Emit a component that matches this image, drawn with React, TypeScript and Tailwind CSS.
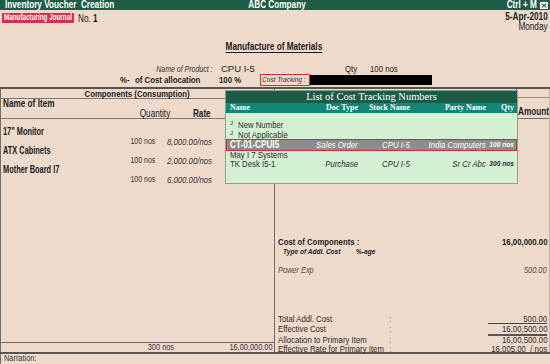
import React from "react"

const SANS = "font-['Liberation_Sans',Arial,sans-serif]"
const SERIF = "font-['Liberation_Serif','Times_New_Roman',serif]"

// Tally draws its sans text narrow; squeeze each run of text horizontally
const L = "inline-block shrink-0 whitespace-nowrap origin-left scale-x-[0.82]"
const R = "inline-block shrink-0 whitespace-nowrap origin-right scale-x-[0.82]"
const C = "inline-block shrink-0 whitespace-nowrap origin-center scale-x-[0.82]"
const L72 = "inline-block shrink-0 whitespace-nowrap origin-left scale-x-[0.74]"
const L70 = "inline-block shrink-0 whitespace-nowrap origin-left scale-x-[0.7]"

const components = [
  { name: "17\" Monitor", rate: "8,000.00/nos" },
  { name: "ATX Cabinets", rate: "2,000.00/nos" },
  { name: "Mother Board I7", rate: "6,000.00/nos" },
]

function Cols({ name, doc, stock, party, qty, bold }: { name: string; doc?: string; stock?: string; party?: string; qty?: string; bold?: boolean }) {
  return (
    <>
      <span className="flex w-[83px]">
        <span className={`${L} ${bold ? "font-bold text-[10px]" : ""}`}>{name}</span>
      </span>
      <span className="flex w-[45px] justify-end">
        <span className={`${R} italic`}>{doc}</span>
      </span>
      <span className="flex w-[52px] justify-end">
        <span className={`${R} italic`}>{stock}</span>
      </span>
      <span className="flex w-[76px] justify-end">
        <span className={`${R} italic`}>{party}</span>
      </span>
      <span className="flex w-[28px] justify-end">
        <span className={`${R} text-[8px] font-bold italic`}>{qty}</span>
      </span>
    </>
  )
}

function TotalRow({ label, value, h, cell = "" }: { label: string; value: string; h: string; cell?: string }) {
  return (
    <div className={`flex ${h} pl-[3px] pr-[2px] text-[9.5px] text-[#2b2b2b]`}>
      <span className="flex w-[111px]">
        <span className={L}>{label}</span>
      </span>
      <span className="text-[#888]">:</span>
      <span className="flex-1" />
      <span className={`flex w-[59px] justify-end ${cell}`}>
        <span className={R}>{value}</span>
      </span>
    </div>
  )
}

export default function App() {
  return (
    <div className={`relative flex h-[364px] w-[550px] flex-col overflow-hidden bg-[#eedaca] text-[10px] text-[#1c1c1c] ${SANS}`}>
      {/* title bar */}
      <div className="flex h-[10px] items-center bg-[#1f5c45] pl-[5px] pr-[2px] text-[10px] font-bold leading-[10px] text-white">
        <div className="flex flex-1">
          <span className={L}>Inventory Voucher&nbsp; Creation</span>
        </div>
        <div className="flex w-[60px] justify-center">
          <span className={C}>ABC Company</span>
        </div>
        <div className="flex flex-1 items-center justify-end gap-[3px]">
          <span className={R}>Ctrl + M</span>
          <svg width="8" height="7" viewBox="0 0 8 7">
            <rect x="0.5" y="0.5" width="7" height="6" fill="#d8dcd8" stroke="#ffffff" />
            <path d="M2 1.8 L6 5.2 M6 1.8 L2 5.2" stroke="#1f3f33" strokeWidth="1" />
          </svg>
        </div>
      </div>

      {/* voucher header */}
      <div className="flex flex-col pb-[1px]">
        <div className="flex h-[23px] justify-between">
          <div className="mt-[3px] flex h-[10px] items-center pl-[2px]">
            <span className="flex h-[10px] w-[72px] shrink-0 items-center bg-[#d3304b] pl-[2px] text-[9px] font-bold text-white">
              <span className={L70}>Manufacturing Journal</span>
            </span>
            <span className={`${L} ml-[4px]`}>
              No. <b>1</b>
            </span>
          </div>
          <div className="flex flex-col items-end pr-[2px] pt-[2px] leading-[10px]">
            <span className={`${R} font-bold`}>5-Apr-2010</span>
            <span className={R}>Monday</span>
          </div>
        </div>
        <div className="mt-[8px] flex h-[11px] justify-center pr-[3px] font-bold leading-[11px]">
          <span className={`${C} underline underline-offset-2`}>Manufacture of Materials</span>
        </div>
        <div className="mt-[12px] flex h-[10px] items-center leading-[10px]">
          <span className="flex w-[213px] justify-end">
            <span className={`${R} text-[8.5px] italic text-[#333]`}>Name of Product :</span>
          </span>
          <span className="w-[132px] pl-[8px] text-[9.5px]">CPU I-5</span>
          <span className="flex w-[25px] text-[9.5px]">
            <span className={L}>Qty</span>
          </span>
          <span className={`${L} text-[9.5px]`}>100 nos</span>
        </div>
        <div className="flex h-[12px] items-center text-[9.5px] font-bold">
          <span className="w-[120px]" />
          <span className="flex w-[15px]">
            <span className={L}>%-</span>
          </span>
          <span className="flex w-[84px]">
            <span className={L}>of Cost allocation</span>
          </span>
          <span className="flex w-[41px]">
            <span className={L}>100 %</span>
          </span>
          <span className="flex h-[12px] w-[50px] items-center border border-[#e02a2a] pl-[1px] text-[8px] font-normal italic text-[#333]">
            <span className={L}>Cost Tracking :</span>
          </span>
          <span className="h-[10px] w-[122px] bg-black" />
        </div>
      </div>

      {/* body */}
      <div className="flex h-[267px] border-y-2 border-[#555]">
        {/* components */}
        <div className="flex w-[275px] flex-col border-x border-[#6e6e6e]">
          <div className="flex h-[10px] justify-center border-b border-[#7a7a7a] text-[9.5px] font-bold leading-[9px]">
            <span className={C}>Components (Consumption)</span>
          </div>
          <div className="flex h-[20px] flex-col border-b border-[#7a7a7a]">
            <div className="flex h-[10px] pl-[2px] font-bold leading-[10px]">
              <span className={L}>Name of Item</span>
            </div>
            <div className="flex h-[9px] leading-[9px]">
              <span className="flex w-[169px] justify-end">
                <span className={R}>Quantity</span>
              </span>
              <span className="flex w-[41px] justify-end">
                <span className={`${R} font-bold`}>Rate</span>
              </span>
            </div>
          </div>
          <div className="mt-[8px] flex flex-col">
            {components.map((c) => (
              <div key={c.name} className="flex flex-col">
                <div className="flex h-[10px] pl-[2px] font-bold leading-[10px]">
                  <span className={L72}>{c.name}</span>
                </div>
                <div className="flex h-[9px] leading-[9px] text-[#333]">
                  <span className="flex w-[154px] justify-end text-[8.5px]">
                    <span className={R}>100 nos</span>
                  </span>
                  <span className="flex w-[57px] justify-end text-[9.5px] italic">
                    <span className={R}>{c.rate}</span>
                  </span>
                </div>
              </div>
            ))}
          </div>
          <div className="flex-1" />
          <div className="flex h-[10px] border-t border-[#6a6a6a] text-[9px] leading-[9px] text-[#3a2f40]">
            <span className="flex w-[173px] justify-end">
              <span className={R}>300 nos</span>
            </span>
            <span className="flex flex-1 justify-end pr-[1px]">
              <span className={R}>16,00,000.00</span>
            </span>
          </div>
        </div>

        {/* cost of components */}
        <div className="flex flex-1 flex-col border-r border-[#c8b4a2]">
          <div className="flex h-[30px]">
            <div className="flex-1" />
            <div className="flex w-[33px] flex-col border-b border-l border-[#6e6e6e]">
              <div className="h-[9px] border-b border-[#9a8a7a]" />
              <div className="flex pl-[1px] pt-[9px] font-bold leading-[10px]">
                <span className={L}>Amount</span>
              </div>
            </div>
          </div>
          <div className="mt-[118px] flex h-[10px] pl-[3px] pr-[2px] text-[9.5px] font-bold leading-[10px]">
            <span className="flex flex-1">
              <span className={L}>Cost of Components :</span>
            </span>
            <span className={R}>16,00,000.00</span>
          </div>
          <div className="flex h-[10px] pl-[8px] text-[8px] font-bold italic leading-[10px]">
            <span className="flex w-[73px]">
              <span className={L}>Type of Addl. Cost</span>
            </span>
            <span className={L}>%-age</span>
          </div>
          <div className="mt-[8px] flex h-[10px] pl-[3px] pr-[2px] text-[9px] italic leading-[10px] text-[#4a4a4a]">
            <span className="flex flex-1">
              <span className={L}>Power Exp</span>
            </span>
            <span className={R}>500.00</span>
          </div>
          <div className="flex-1" />
          <TotalRow label="Total Addl. Cost" value="500.00" h="h-[11px] pt-[1px] leading-[9px]" cell="border-b border-[#444]" />
          <TotalRow label="Effective Cost" value="16,00,500.00" h="h-[12px] leading-[9px]" cell="border-b-2 border-[#555]" />
          <TotalRow label="Allocation to Primary Item" value="16,00,500.00" h="h-[9px] leading-[8px]" />
          <TotalRow label="Effective Rate for Primary Item" value={"16,005.00\u00a0\u00a0/ nos"} h="h-[7px] leading-[8px]" />
        </div>
      </div>

      <div className="flex h-[10px] border-l border-[#6e6e6e] pl-[3px] text-[9px] leading-[9px] text-[#333]">
        <span className={L}>Narration:</span>
      </div>

      {/* cost tracking list popup */}
      <div className="absolute left-[225px] top-[90px] flex h-[94px] w-[293px] flex-col border border-[#8fa08f] bg-[#d4f0d3]">
        <div className={`h-[12px] bg-[#1c5b45] text-center text-[10.5px] leading-[12px] text-white ${SERIF}`}>List of Cost Tracking Numbers</div>
        <div className={`flex h-[10px] bg-[#108679] pl-[4px] text-[8px] font-bold leading-[10px] text-white ${SERIF}`}>
          <span className="w-[83px]">Name</span>
          <span className="w-[45px] text-right">Doc Type</span>
          <span className="w-[52px] text-right">Stock Name</span>
          <span className="w-[76px] text-right">Party Name</span>
          <span className="w-[28px] text-right">Qty</span>
        </div>
        <div className="flex flex-col pt-[7px] text-[9.5px] text-[#2e2e2e]">
          <div className="flex h-[10px] items-center pl-[4px] leading-[10px]">
            <span className="w-[8px] self-start text-[6px] leading-[6px]">J</span>
            <span className={L}>New Number</span>
          </div>
          <div className="flex h-[9px] items-center pl-[4px] leading-[9px]">
            <span className="w-[8px] self-start text-[6px] leading-[6px]">J</span>
            <span className={L}>Not Applicable</span>
          </div>
          <div className="flex h-[12px] items-center border border-[#e0262e] bg-[#8c8c8c] pl-[3px] leading-[10px] text-white">
            <Cols name="CT-01-CPUI5" bold doc="Sales Order" stock="CPU I-5" party="India Computers" qty="100 nos" />
          </div>
          <div className="flex h-[8px] items-center pl-[4px] leading-[8px]">
            <Cols name="May I 7 Systems" />
          </div>
          <div className="flex h-[10px] items-center pl-[4px] leading-[10px]">
            <Cols name="TK Desk I5-1" doc="Purchase" stock="CPU I-5" party="Sr Cr Abc" qty="300 nos" />
          </div>
        </div>
      </div>
    </div>
  )
}
